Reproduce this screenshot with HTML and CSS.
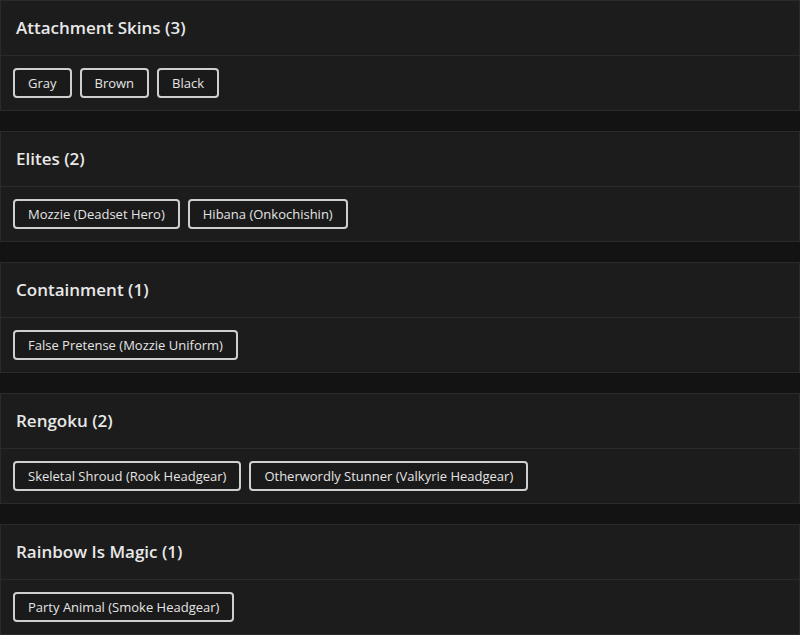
FILE: index.html
```html
<!DOCTYPE html>
<html>
<head>
<meta charset="utf-8">
<link rel="stylesheet" href="styles.css">
</head>
<body>
<div class="list">
  <section class="card">
    <div class="card-head">Attachment Skins (3)</div>
    <div class="card-body">
      <span class="chip">Gray</span>
      <span class="chip">Brown</span>
      <span class="chip">Black</span>
    </div>
  </section>
  <section class="card">
    <div class="card-head">Elites (2)</div>
    <div class="card-body">
      <span class="chip">Mozzie (Deadset Hero)</span>
      <span class="chip">Hibana (Onkochishin)</span>
    </div>
  </section>
  <section class="card">
    <div class="card-head">Containment (1)</div>
    <div class="card-body">
      <span class="chip">False Pretense (Mozzie Uniform)</span>
    </div>
  </section>
  <section class="card">
    <div class="card-head">Rengoku (2)</div>
    <div class="card-body">
      <span class="chip">Skeletal Shroud (Rook Headgear)</span>
      <span class="chip">Otherwordly Stunner (Valkyrie Headgear)</span>
    </div>
  </section>
  <section class="card">
    <div class="card-head">Rainbow Is Magic (1)</div>
    <div class="card-body">
      <span class="chip">Party Animal (Smoke Headgear)</span>
    </div>
  </section>
</div>
</body>
</html>
```

FILE: styles.css
```css
html, body {
  margin: 0;
  padding: 0;
  background: #131313;
  font-family: "Open Sans", "DejaVu Sans", sans-serif;
  color: #e6e6e6;
}
.list {
  display: flex;
  flex-direction: column;
  gap: 20px;
}
.card {
  background: #1c1c1c;
  border: 1px solid #2b2b2b;
}
.card-head {
  height: 55px;
  box-sizing: border-box;
  display: flex;
  align-items: center;
  padding: 0 0 2px 15px;
  font-size: 17px;
  font-weight: 600;
  border-bottom: 1px solid #2b2b2b;
  color: #e8e8e8;
}
.card-body {
  height: 54px;
  box-sizing: border-box;
  padding: 12px 12px;
  display: flex;
  gap: 8px;
  align-items: flex-start;
}
.chip {
  height: 30px;
  box-sizing: border-box;
  display: inline-flex;
  align-items: center;
  padding: 0 13px;
  border: 2px solid #cfcfcf;
  border-radius: 4px;
  background: #1a1a1a;
  font-size: 13px;
  color: #e4e4e4;
}
```
